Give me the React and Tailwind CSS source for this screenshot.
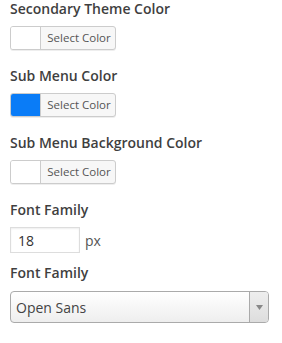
export default function App() {
  const font = { fontFamily: '"Open Sans", "Liberation Sans", sans-serif' };

  const ColorPicker = ({ color }) => (
    <div className="flex h-6 w-[106px] overflow-hidden rounded-[3px] border border-[#cccccc] bg-[#f7f7f7] shadow-[0_1px_0_#eeeeee]">
      <span className="w-[30px] border-r border-[#cccccc]" style={{ background: color }} />
      <span className="flex flex-1 items-center justify-center pl-[2px] text-[11.5px] text-[#555555]">Select Color</span>
    </div>
  );

  const Title = ({ children, mb = "mb-[9px]" }) => (
    <h3 className={`text-[14px] font-semibold leading-4 text-[#3f3f3f] ${mb}`}>{children}</h3>
  );

  return (
    <div className="min-h-[343px] w-[282px] bg-white px-[10px] pt-[1px]" style={font}>
      <Title>Secondary Theme Color</Title>
      <ColorPicker color="#ffffff" />

      <div className="mt-[18px]">
        <Title>Sub Menu Color</Title>
        <ColorPicker color="#0a7cf7" />
      </div>

      <div className="mt-[18px]">
        <Title>Sub Menu Background Color</Title>
        <ColorPicker color="#ffffff" />
      </div>

      <div className="mt-[18px]">
        <Title mb="mb-[9px]">Font Family</Title>
        <div className="flex items-center gap-[5px]">
          <div className="flex h-[26px] w-[70px] items-center border border-[#dddddd] px-[7px] text-[14px] text-[#333333] shadow-[inset_0_1px_2px_rgba(0,0,0,0.07)]">
            18
          </div>
          <span className="text-[14px] text-[#555555]">px</span>
        </div>
      </div>

      <div className="mt-[12px]">
        <Title mb="mb-[10px]">Font Family</Title>
        <div className="flex h-8 w-[259px] overflow-hidden rounded-[4px] border border-[#aaaaaa] bg-gradient-to-b from-white to-[#eeeeee]">
          <span className="flex flex-1 items-center px-[5px] text-[14px] text-[#444444]">Open Sans</span>
          <span className="flex w-[19px] items-center justify-center border-l border-[#aaaaaa] bg-gradient-to-b from-[#eeeeee] to-[#dddddd]">
            <svg width="7" height="5" viewBox="0 0 7 5">
              <path d="M0 0h7L3.5 5z" fill="#888888" />
            </svg>
          </span>
        </div>
      </div>
    </div>
  );
}
